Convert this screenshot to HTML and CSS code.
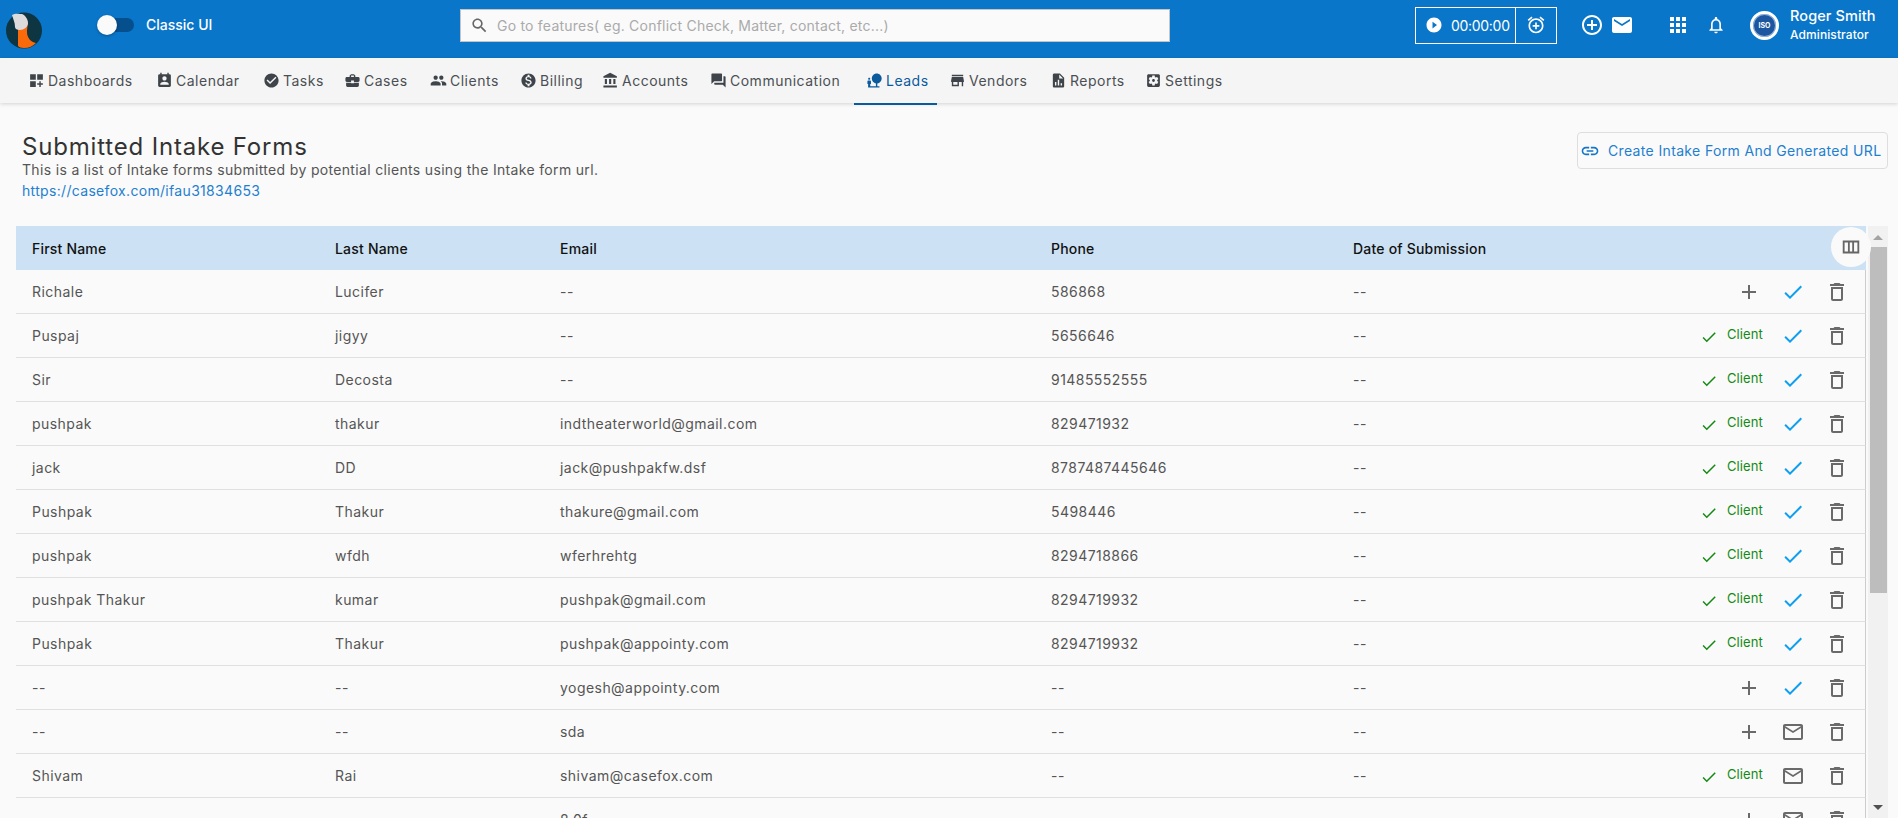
FILE: index.html
```html
<!DOCTYPE html>
<html lang="en">
<head>
<meta charset="utf-8">
<title>Submitted Intake Forms</title>
<link rel="stylesheet" href="styles.css">
</head>
<body>
<svg class="sprite" aria-hidden="true">
<symbol id="i-dash" viewBox="0 0 24 24"><path d="M3 3h8v8H3zm10 0h8v8h-8zM3 13h8v8H3zm15 0h-2v3h-3v2h3v3h2v-3h3v-2h-3z"/></symbol>
<symbol id="i-cal" viewBox="0 0 24 24"><path d="M19 3h-1V1h-2v2H8V1H6v2H5a2 2 0 0 0-2 2v14a2 2 0 0 0 2 2h14a2 2 0 0 0 2-2V5a2 2 0 0 0-2-2zm-7 3c1.66 0 3 1.34 3 3s-1.34 3-3 3-3-1.34-3-3 1.34-3 3-3zm6 12H6v-1c0-2 4-3.1 6-3.1s6 1.1 6 3.1v1z"/></symbol>
<symbol id="i-task" viewBox="0 0 24 24"><path d="M12 2C6.48 2 2 6.48 2 12s4.48 10 10 10 10-4.48 10-10S17.52 2 12 2zm-2 15l-5-5 1.41-1.41L10 14.17l7.59-7.59L19 8l-9 9z"/></symbol>
<symbol id="i-case" viewBox="0 0 24 24"><path d="M10 16v-1H3.01L3 19c0 1.11.89 2 2 2h14c1.11 0 2-.89 2-2v-4h-7v1h-4zm10-9h-4.01V5l-2-2h-4l-2 2v2H4c-1.1 0-2 .9-2 2v3c0 1.11.89 2 2 2h6v-2h4v2h6c1.1 0 2-.9 2-2V9c0-1.1-.9-2-2-2zm-6 0h-4V5h4v2z"/></symbol>
<symbol id="i-people" viewBox="0 0 24 24"><path d="M16 11c1.66 0 2.99-1.34 2.99-3S17.66 5 16 5c-1.66 0-3 1.34-3 3s1.34 3 3 3zm-8 0c1.66 0 2.99-1.34 2.99-3S9.66 5 8 5C6.34 5 5 6.34 5 8s1.34 3 3 3zm0 2c-2.33 0-7 1.17-7 3.5V19h14v-2.5c0-2.33-4.67-3.5-7-3.5zm8 0c-.29 0-.62.02-.97.05 1.16.84 1.97 1.97 1.97 3.45V19h6v-2.5c0-2.33-4.67-3.5-7-3.5z"/></symbol>
<symbol id="i-bill" viewBox="0 0 24 24"><path d="M12 2C6.48 2 2 6.48 2 12s4.48 10 10 10 10-4.48 10-10S17.52 2 12 2zm1.41 16.09V20h-2.67v-1.93c-1.71-.36-3.16-1.46-3.27-3.4h1.96c.1 1.05.82 1.87 2.65 1.87 1.96 0 2.4-.98 2.4-1.59 0-.83-.44-1.61-2.67-2.14-2.48-.6-4.18-1.62-4.18-3.67 0-1.72 1.39-2.84 3.11-3.21V4h2.67v1.95c1.86.45 2.79 1.86 2.85 3.39H14.3c-.05-1.11-.64-1.87-2.22-1.87-1.5 0-2.4.68-2.4 1.64 0 .84.65 1.39 2.67 1.91s4.18 1.39 4.18 3.91c-.01 1.83-1.38 2.83-3.12 3.16z"/></symbol>
<symbol id="i-bank" viewBox="0 0 24 24"><path d="M4 10v7h3v-7H4zm6 0v7h3v-7h-3zM2 22h19v-3H2v3zm14-12v7h3v-7h-3zm-4.5-9L2 6v2h19V6l-9.5-5z"/></symbol>
<symbol id="i-chat" viewBox="0 0 24 24"><path d="M21 6h-2v9H6v2c0 .55.45 1 1 1h11l4 4V7c0-.55-.45-1-1-1zm-4 6V3c0-.55-.45-1-1-1H3c-.55 0-1 .45-1 1v14l4-4h10c.55 0 1-.45 1-1z"/></symbol>
<symbol id="i-lead" viewBox="0 0 24 24"><path d="M22.17 9.17c0-3.87-3.13-7-7-7s-7 3.13-7 7c0 3.47 2.52 6.34 5.83 6.89V20H6v-3h1v-4c0-.55-.45-1-1-1H3c-.55 0-1 .45-1 1v4h1v5h16v-2h-3v-3.88c3.47-.41 6.17-3.36 6.17-6.95zM4.5 11c.83 0 1.5-.67 1.5-1.5S5.33 8 4.5 8 3 8.67 3 9.5 3.67 11 4.5 11z"/></symbol>
<symbol id="i-store" viewBox="0 0 24 24"><path d="M20 4H4v2h16V4zm1 10v-2l-1-5H4l-1 5v2h1v6h10v-6h4v6h2v-6h1zm-9 4H6v-4h6v4z"/></symbol>
<symbol id="i-report" viewBox="0 0 24 24"><path d="M14 2H6c-1.1 0-2 .9-2 2v16c0 1.1.9 2 2 2h12c1.1 0 2-.9 2-2V8l-6-6zM9 19H7v-5h2v5zm4 0h-2v-8h2v8zm4 0h-2v-3h2v3zM13 9V3.5L18.5 9H13z"/></symbol>
<symbol id="i-gear" viewBox="0 0 24 24"><path d="M12 10c-1.1 0-2 .9-2 2s.9 2 2 2 2-.9 2-2-.9-2-2-2zm7-7H5c-1.11 0-2 .9-2 2v14c0 1.1.89 2 2 2h14c1.11 0 2-.9 2-2V5c0-1.1-.89-2-2-2zm-1.75 9c0 .23-.02.46-.05.68l1.48 1.16c.13.11.17.3.08.45l-1.4 2.42c-.09.15-.27.21-.43.15l-1.74-.7c-.36.28-.76.51-1.18.69l-.26 1.85c-.03.17-.18.3-.35.3h-2.8c-.17 0-.32-.13-.35-.29l-.26-1.85c-.43-.18-.82-.41-1.18-.69l-1.74.7c-.16.06-.34 0-.43-.15l-1.4-2.42c-.09-.15-.05-.34.08-.45l1.48-1.16c-.03-.23-.05-.46-.05-.69 0-.23.02-.46.05-.68l-1.48-1.16c-.13-.11-.17-.3-.08-.45l1.4-2.42c.09-.15.27-.21.43-.15l1.74.7c.36-.28.76-.51 1.18-.69l.26-1.85c.03-.17.18-.3.35-.3h2.8c.17 0 .32.13.35.29l.26 1.85c.43.18.82.41 1.18.69l1.74-.7c.16-.06.34 0 .43.15l1.4 2.42c.09.15.05.34-.08.45l-1.48 1.16c.03.23.05.46.05.69z"/></symbol>
<symbol id="i-search" viewBox="0 0 24 24"><path d="M15.5 14h-.79l-.28-.27C15.41 12.59 16 11.11 16 9.5 16 5.91 13.09 3 9.5 3S3 5.91 3 9.5 5.91 16 9.5 16c1.61 0 3.09-.59 4.23-1.57l.27.28v.79l5 4.99L20.49 19l-4.99-5zm-6 0C7.01 14 5 11.99 5 9.5S7.01 5 9.5 5 14 7.01 14 9.5 11.99 14 9.5 14z"/></symbol>
<symbol id="i-play" viewBox="0 0 24 24"><path d="M12 2C6.48 2 2 6.48 2 12s4.48 10 10 10 10-4.48 10-10S17.52 2 12 2zm-2 14.5v-9l6 4.5-6 4.5z"/></symbol>
<symbol id="i-alarm" viewBox="0 0 24 24"><path d="M7.88 3.39L6.6 1.86 2 5.71l1.29 1.53 4.59-3.85zM22 5.72l-4.6-3.86-1.29 1.53 4.6 3.86L22 5.72zM12 4c-4.97 0-9 4.03-9 9s4.02 9 9 9c4.97 0 9-4.03 9-9s-4.03-9-9-9zm0 16c-3.87 0-7-3.13-7-7s3.13-7 7-7 7 3.13 7 7-3.13 7-7 7zm1-11h-2v3H8v2h3v3h2v-3h3v-2h-3V9z"/></symbol>
<symbol id="i-addc" viewBox="0 0 24 24"><path d="M13 7h-2v4H7v2h4v4h2v-4h4v-2h-4V7zm-1-5C6.48 2 2 6.48 2 12s4.48 10 10 10 10-4.48 10-10S17.52 2 12 2zm0 18c-4.41 0-8-3.59-8-8s3.59-8 8-8 8 3.59 8 8-3.59 8-8 8z"/></symbol>
<symbol id="i-mail" viewBox="0 0 24 24"><path d="M20 4H4c-1.1 0-1.99.9-1.99 2L2 18c0 1.1.9 2 2 2h16c1.1 0 2-.9 2-2V6c0-1.1-.9-2-2-2zm0 4l-8 5-8-5V6l8 5 8-5v2z"/></symbol>
<symbol id="i-apps" viewBox="0 0 24 24"><path d="M4 8h4V4H4v4zm6 12h4v-4h-4v4zm-6 0h4v-4H4v4zm0-6h4v-4H4v4zm6 0h4v-4h-4v4zm6-10v4h4V4h-4zm-6 4h4V4h-4v4zm6 6h4v-4h-4v4zm0 6h4v-4h-4v4z"/></symbol>
<symbol id="i-bell" viewBox="0 0 24 24"><path d="M12 22c1.1 0 2-.9 2-2h-4c0 1.1.9 2 2 2zm6-6v-5c0-3.07-1.63-5.64-4.5-6.32V4c0-.83-.67-1.5-1.5-1.5s-1.5.67-1.5 1.5v.68C7.64 5.36 6 7.92 6 11v5l-2 2v1h16v-1l-2-2zm-2 1H8v-6c0-2.48 1.51-4.5 4-4.5s4 2.02 4 4.5v6z"/></symbol>
<symbol id="i-link" viewBox="0 0 24 24"><path d="M3.9 12c0-1.71 1.39-3.1 3.1-3.1h4V7H7c-2.76 0-5 2.24-5 5s2.24 5 5 5h4v-1.9H7c-1.71 0-3.1-1.39-3.1-3.1zM8 13h8v-2H8v2zm9-6h-4v1.9h4c1.71 0 3.1 1.39 3.1 3.1s-1.39 3.1-3.1 3.1h-4V17h4c2.76 0 5-2.24 5-5s-2.24-5-5-5z"/></symbol>
<symbol id="i-cols" viewBox="0 0 24 24"><path d="M3 5v14h18V5H3zm2 2h3.67v10H5V7zm5.67 0h2.66v10h-2.66V7zm4.66 0H19v10h-3.67V7z"/></symbol>
<symbol id="i-add" viewBox="0 0 24 24"><path d="M19 13h-6v6h-2v-6H5v-2h6V5h2v6h6v2z"/></symbol>
<symbol id="i-check" viewBox="0 0 24 24"><path d="M9 16.17L4.83 12l-1.42 1.41L9 19 21 7l-1.41-1.41z"/></symbol>
<symbol id="i-trash" viewBox="0 0 24 24"><path d="M6 19c0 1.1.9 2 2 2h8c1.1 0 2-.9 2-2V7H6v12zM8 9h8v10H8V9zm7.5-5l-1-1h-5l-1 1H5v2h14V4z"/></symbol>
<symbol id="i-mailo" viewBox="0 0 24 24"><path d="M20 4H4c-1.1 0-1.99.9-1.99 2L2 18c0 1.1.9 2 2 2h16c1.1 0 2-.9 2-2V6c0-1.1-.9-2-2-2zm0 14H4V8l8 5 8-5v10zm-8-7L4 6h16l-8 5z"/></symbol>
</svg>

<header class="topbar">
  <svg class="logo" viewBox="0 0 40 40" aria-label="CaseFox logo">
    <circle cx="20" cy="21.5" r="18" fill="#0d3542"/>
    <path d="M22 9c3 5 1 9 1 14 0 6 4 10 9 11-3 3-7 5-12 5-3 0-5-1-6-2V19z" fill="#fb6a0a"/>
    <path d="M8 6c3-2 8-1 10-1 3 1 6 5 6 9 0 4-4 7-8 7-3 0-5-1-5-3 0-5-2-8-3-12z" fill="#dcdcdc"/>
  </svg>
  <div class="switch"><span class="switch-track"></span><span class="switch-knob"></span></div>
  <span class="classic">Classic UI</span>
  <div class="search">
    <svg class="ic search-ic"><use href="#i-search"/></svg>
    <span class="search-text">Go to features( eg. Conflict Check, Matter, contact, etc...)</span>
  </div>
  <div class="timer">
    <div class="timer-main"><svg class="ic play"><use href="#i-play"/></svg><span>00:00:00</span></div>
    <div class="timer-alarm"><svg class="ic alarm"><use href="#i-alarm"/></svg></div>
  </div>
  <svg class="ic top-add"><use href="#i-addc"/></svg>
  <svg class="ic top-mail"><use href="#i-mail"/></svg>
  <svg class="ic top-apps"><use href="#i-apps"/></svg>
  <svg class="ic top-bell"><use href="#i-bell"/></svg>
  <div class="avatar"><span>ISO</span></div>
  <div class="user"><div class="user-name">Roger Smith</div><div class="user-role">Administrator</div></div>
</header>

<nav class="nav">
  <a class="nav-item"><svg class="ic"><use href="#i-dash"/></svg>Dashboards</a>
  <a class="nav-item"><svg class="ic"><use href="#i-cal"/></svg>Calendar</a>
  <a class="nav-item"><svg class="ic"><use href="#i-task"/></svg>Tasks</a>
  <a class="nav-item"><svg class="ic"><use href="#i-case"/></svg>Cases</a>
  <a class="nav-item"><svg class="ic"><use href="#i-people"/></svg>Clients</a>
  <a class="nav-item"><svg class="ic"><use href="#i-bill"/></svg>Billing</a>
  <a class="nav-item"><svg class="ic"><use href="#i-bank"/></svg>Accounts</a>
  <a class="nav-item"><svg class="ic"><use href="#i-chat"/></svg>Communication</a>
  <a class="nav-item active"><svg class="ic"><use href="#i-lead"/></svg>Leads</a>
  <a class="nav-item"><svg class="ic"><use href="#i-store"/></svg>Vendors</a>
  <a class="nav-item"><svg class="ic"><use href="#i-report"/></svg>Reports</a>
  <a class="nav-item"><svg class="ic"><use href="#i-gear"/></svg>Settings</a>
</nav>

<main class="main">
  <section class="head">
    <div class="head-text">
      <h1 class="title">Submitted Intake Forms</h1>
      <p class="sub">This is a list of Intake forms submitted by potential clients using the Intake form url.</p>
      <a class="url">https://casefox.com/ifau31834653</a>
    </div>
    <button class="create"><svg class="ic"><use href="#i-link"/></svg>Create Intake Form And Generated URL</button>
  </section>

  <section class="grid-area">
    <div class="table-wrap">
      <table class="table">
        <colgroup><col class="c1"><col class="c2"><col class="c3"><col class="c4"><col class="c5"><col></colgroup>
        <thead><tr><th>First Name</th><th>Last Name</th><th>Email</th><th>Phone</th><th>Date of Submission</th><th></th></tr></thead>
        <tbody>
          <tr><td>Richale</td><td>Lucifer</td><td>--</td><td>586868</td><td>--</td><td><div class="acts"><svg class="ic a-add"><use href="#i-add"/></svg><svg class="ic a-send"><use href="#i-check"/></svg><svg class="ic a-del"><use href="#i-trash"/></svg></div></td></tr>
          <tr><td>Puspaj</td><td>jigyy</td><td>--</td><td>5656646</td><td>--</td><td><div class="acts"><svg class="ic a-ok"><use href="#i-check"/></svg><span class="client">Client</span><svg class="ic a-send"><use href="#i-check"/></svg><svg class="ic a-del"><use href="#i-trash"/></svg></div></td></tr>
          <tr><td>Sir</td><td>Decosta</td><td>--</td><td>91485552555</td><td>--</td><td><div class="acts"><svg class="ic a-ok"><use href="#i-check"/></svg><span class="client">Client</span><svg class="ic a-send"><use href="#i-check"/></svg><svg class="ic a-del"><use href="#i-trash"/></svg></div></td></tr>
          <tr><td>pushpak</td><td>thakur</td><td>indtheaterworld@gmail.com</td><td>829471932</td><td>--</td><td><div class="acts"><svg class="ic a-ok"><use href="#i-check"/></svg><span class="client">Client</span><svg class="ic a-send"><use href="#i-check"/></svg><svg class="ic a-del"><use href="#i-trash"/></svg></div></td></tr>
          <tr><td>jack</td><td>DD</td><td>jack@pushpakfw.dsf</td><td>8787487445646</td><td>--</td><td><div class="acts"><svg class="ic a-ok"><use href="#i-check"/></svg><span class="client">Client</span><svg class="ic a-send"><use href="#i-check"/></svg><svg class="ic a-del"><use href="#i-trash"/></svg></div></td></tr>
          <tr><td>Pushpak</td><td>Thakur</td><td>thakure@gmail.com</td><td>5498446</td><td>--</td><td><div class="acts"><svg class="ic a-ok"><use href="#i-check"/></svg><span class="client">Client</span><svg class="ic a-send"><use href="#i-check"/></svg><svg class="ic a-del"><use href="#i-trash"/></svg></div></td></tr>
          <tr><td>pushpak</td><td>wfdh</td><td>wferhrehtg</td><td>8294718866</td><td>--</td><td><div class="acts"><svg class="ic a-ok"><use href="#i-check"/></svg><span class="client">Client</span><svg class="ic a-send"><use href="#i-check"/></svg><svg class="ic a-del"><use href="#i-trash"/></svg></div></td></tr>
          <tr><td>pushpak Thakur</td><td>kumar</td><td>pushpak@gmail.com</td><td>8294719932</td><td>--</td><td><div class="acts"><svg class="ic a-ok"><use href="#i-check"/></svg><span class="client">Client</span><svg class="ic a-send"><use href="#i-check"/></svg><svg class="ic a-del"><use href="#i-trash"/></svg></div></td></tr>
          <tr><td>Pushpak</td><td>Thakur</td><td>pushpak@appointy.com</td><td>8294719932</td><td>--</td><td><div class="acts"><svg class="ic a-ok"><use href="#i-check"/></svg><span class="client">Client</span><svg class="ic a-send"><use href="#i-check"/></svg><svg class="ic a-del"><use href="#i-trash"/></svg></div></td></tr>
          <tr><td>--</td><td>--</td><td>yogesh@appointy.com</td><td>--</td><td>--</td><td><div class="acts"><svg class="ic a-add"><use href="#i-add"/></svg><svg class="ic a-send"><use href="#i-check"/></svg><svg class="ic a-del"><use href="#i-trash"/></svg></div></td></tr>
          <tr><td>--</td><td>--</td><td>sda</td><td>--</td><td>--</td><td><div class="acts"><svg class="ic a-add"><use href="#i-add"/></svg><svg class="ic a-send a-mail"><use href="#i-mailo"/></svg><svg class="ic a-del"><use href="#i-trash"/></svg></div></td></tr>
          <tr><td>Shivam</td><td>Rai</td><td>shivam@casefox.com</td><td>--</td><td>--</td><td><div class="acts"><svg class="ic a-ok"><use href="#i-check"/></svg><span class="client">Client</span><svg class="ic a-send a-mail"><use href="#i-mailo"/></svg><svg class="ic a-del"><use href="#i-trash"/></svg></div></td></tr>
          <tr><td></td><td></td><td>8.0f</td><td></td><td></td><td><div class="acts"><svg class="ic a-add"><use href="#i-add"/></svg><svg class="ic a-send a-mail"><use href="#i-mailo"/></svg><svg class="ic a-del"><use href="#i-trash"/></svg></div></td></tr>
        </tbody>
      </table>
    </div>
    <div class="scrollbar">
      <span class="arrow up"></span>
      <span class="thumb"></span>
      <span class="arrow down"></span>
    </div>
    <div class="cols-btn"><svg class="ic"><use href="#i-cols"/></svg></div>
  </section>
</main>
</body>
</html>
```

FILE: styles.css
```css
* { box-sizing: border-box; }
html, body { height: 100%; }
body {
  margin: 0;
  height: 818px;
  overflow: hidden;
  display: flex;
  flex-direction: column;
  background: #fafafa;
  color: #555;
  font-family: Inter, "Noto Sans", "Liberation Sans", sans-serif;
  font-size: 14px;
  letter-spacing: .35px;
}
.sprite { display: none; }
.ic { display: block; width: 16px; height: 16px; fill: currentColor; flex: none; }

/* top bar */
.topbar {
  height: 58px;
  flex: none;
  background: #0a76c9;
  color: #fff;
  display: flex;
  align-items: center;
}
.logo { width: 40px; height: 40px; margin: 0 1px 0 4px; flex: none; }
.switch { position: relative; width: 37px; height: 20px; margin-left: 52px; margin-top: -9px; flex: none; }
.switch-track { position: absolute; left: 3px; right: 0; top: 3px; height: 14px; border-radius: 7px; background: #054f8d; }
.switch-knob { position: absolute; left: 0; top: 0; width: 20px; height: 20px; border-radius: 50%; background: #fafafa; box-shadow: 0 1px 3px rgba(0,0,0,.3); }
.classic { margin-left: 12px; width: 67px; margin-top: -9px; font-size: 14px; font-weight: 500; white-space: nowrap; letter-spacing: 0; flex: none; }
.search {
  width: 710px; height: 33px; margin-left: 247px; margin-top: -8px;
  background: #fafafa; border: 1px solid #c4c4c4;
  display: flex; align-items: center; flex: none;
}
.search-ic { width: 19px; height: 19px; margin-left: 9px; color: #666; }
.search-text { margin-left: 8px; color: #aaa; font-size: 14px; white-space: nowrap; letter-spacing: .22px; }
.timer {
  width: 142px; height: 37px; margin-left: 245px; margin-top: -8px;
  border: 1px solid #fff; display: flex; flex: none;
}
.timer-main { width: 100px; display: flex; align-items: center; border-right: 1px solid #fff; font-size: 14px; letter-spacing: -.3px; white-space: nowrap; }
.play { width: 18px; height: 18px; margin: 0 8px 0 9px; }
.timer-alarm { flex: 1; display: flex; align-items: center; justify-content: center; }
.alarm { width: 20px; height: 20px; }
.top-add { width: 24px; height: 24px; margin-left: 23px; margin-top: -8px; }
.top-mail { width: 24px; height: 24px; margin-left: 6px; margin-top: -8px; }
.top-apps { width: 24px; height: 24px; margin-left: 32px; margin-top: -8px; }
.top-bell { width: 20px; height: 20px; margin-left: 16px; margin-top: -8px; }
.avatar {
  width: 29px; height: 29px; margin-left: 24px; margin-top: -8px; flex: none;
  border-radius: 50%; background: #1d56a0; border: 3px solid #fff;
  box-shadow: inset 0 0 0 1px #8fb0d8;
  display: flex; align-items: center; justify-content: center;
  font-size: 7px; font-weight: 700; letter-spacing: 0; color: #fff;
}
.user { margin-left: 11px; margin-top: -8px; white-space: nowrap; letter-spacing: .1px; }
.user-name { font-size: 14.5px; font-weight: 500; line-height: 20px; }
.user-role { font-size: 12px; font-weight: 500; line-height: 18px; }

/* navigation */
.nav {
  height: 45px;
  flex: none;
  background: #f5f5f5;
  box-shadow: 0 1px 4px rgba(0,0,0,.16);
  padding-left: 16px;
  display: grid;
  grid-template-columns: 128px 107px 81px 86px 90px 82px 108px 156px 83px 101px 95px auto;
  justify-content: start;
  position: relative;
}
.nav-item {
  display: flex;
  align-items: center;
  gap: 3.5px;
  padding: 0 0 2px 11.5px;
  height: 47px;
  color: #4b4f54;
  white-space: nowrap;
  letter-spacing: .5px;
}
.nav-item .ic { width: 17px; height: 17px; color: #3e444a; }
.nav-item.active { color: #0b5a9e; border-bottom: 2px solid #0b5a9e; padding-bottom: 0; }
.nav-item.active .ic { color: #0b5a9e; }

/* page head */
.main { flex: 1; min-height: 0; padding: 29px 10px 0 16px; display: flex; flex-direction: column; }
.head { display: flex; justify-content: space-between; align-items: flex-start; height: 94px; flex: none; }
.head-text { padding-left: 6px; }
.title { margin: 0; padding-top: 1px; font-size: 24px; line-height: 28px; font-weight: 400; color: #333; letter-spacing: .82px; }
.sub { margin: 0; font-size: 14px; line-height: 18px; color: #555; letter-spacing: .33px; }
.url { display: block; margin-top: 2px; font-size: 14px; line-height: 20px; color: #1f7fd0; letter-spacing: .32px; }
.create {
  width: 311px; height: 37px;
  display: flex; align-items: center; gap: 8px; padding: 0 0 0 2px;
  background: #fafafa; border: 1px solid #dedede; border-radius: 4px;
  color: #1f7fd0; font: inherit; letter-spacing: .35px; white-space: nowrap;
}
.create .ic { width: 20px; height: 20px; color: #1576c8; }

/* table */
.grid-area { flex: 1; min-height: 0; display: flex; gap: 2px; position: relative; }
.table-wrap { width: 1850px; overflow: hidden; flex: none; }
.table { width: 1850px; table-layout: fixed; border-collapse: separate; border-spacing: 0; }
.c1 { width: 303px; } .c2 { width: 225px; } .c3 { width: 491px; } .c4 { width: 302px; } .c5 { width: 300px; }
.table th {
  height: 44px; padding: 0 0 0 16px; text-align: left;
  background: #cce1f3; color: #111; font-weight: 500; font-size: 14px; letter-spacing: .2px;
}
.table td {
  height: 44px; padding: 0 0 0 16px;
  border-bottom: 1px solid #e0e0e0; color: #555; white-space: nowrap; letter-spacing: .45px;
}
.table td:last-child { border-right: 1px solid #ccc; padding: 0; }
.acts { display: flex; align-items: center; justify-content: flex-end; gap: 20px; padding-right: 16px; color: #6a6a6a; }
.acts .ic { width: 24px; height: 24px; }
.acts .a-ok.ic { width: 18px; height: 18px; color: #148a14; margin: 2px -11px 0 0; }
.client { width: 54px; margin: -3px -20px 0 0; color: #148a14; font-size: 13px; letter-spacing: .1px; }
.a-send { color: #0ea0ee; }
.acts .a-mail { color: #6a6a6a; }
.cols-btn {
  position: absolute; right: 17px; top: 1px; width: 40px; height: 40px;
  border-radius: 50%; background: #fafafa; color: #666;
  display: flex; align-items: center; justify-content: center;
}
.cols-btn .ic { width: 22px; height: 22px; }

/* scrollbar */
.scrollbar { width: 20px; flex: none; background: #f1f1f1; display: flex; flex-direction: column; align-items: center; }
.arrow { display: block; width: 0; height: 0; border-left: 5px solid transparent; border-right: 5px solid transparent; flex: none; }
.arrow.up { margin: 9px 0 7px; border-bottom: 5px solid #a3a3a3; }
.arrow.down { margin: auto 0 8px; border-top: 5px solid #505050; }
.thumb { display: block; width: 17px; height: 346px; background: #bdbdbd; flex: none; }
```
